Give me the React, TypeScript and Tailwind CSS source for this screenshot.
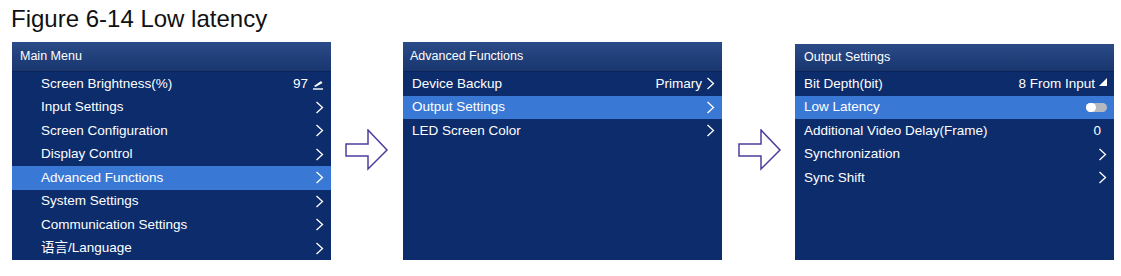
import React from 'react'

type Row = {
  label: string
  value?: string
  icon?: 'chevron' | 'edit' | 'drop' | 'toggle' | 'none'
  active?: boolean
}

const Chevron = () => (
  <svg width="9" height="13" viewBox="0 0 9 13" className="shrink-0">
    <polyline points="1.5,1 7.5,6.5 1.5,12" fill="none" stroke="white" strokeWidth="1.3" />
  </svg>
)

const EditIcon = () => (
  <svg width="12" height="12" viewBox="0 0 12 12" className="shrink-0">
    <path d="M2 8 L9 3 L10.5 5 L3.5 9 Z" fill="white" />
    <line x1="1" y1="11" x2="11" y2="11" stroke="white" strokeWidth="1.4" />
  </svg>
)

const DropIcon = () => (
  <svg width="8" height="8" viewBox="0 0 8 8" className="shrink-0 mb-[3px]">
    <polygon points="8,0 8,8 0,8" fill="white" />
  </svg>
)

const Toggle = () => (
  <div className="relative h-[9px] w-[21px] rounded-full bg-[#b5b8bf]">
    <div className="absolute left-0 top-0 h-[9px] w-[10px] rounded-full bg-white" />
  </div>
)

const Arrow = () => (
  <svg width="44" height="42" viewBox="0 0 44 42" className="shrink-0 mt-[87px]">
    <polygon
      points="1,15 23,15 23,1 42,21 23,40 23,27 1,27"
      fill="white"
      stroke="#4b3f9e"
      strokeWidth="1.5"
      strokeLinejoin="miter"
    />
  </svg>
)

const Panel = (props: {
  title: string
  rows: Row[]
  indent: string
  titlePad: string
  head: string
  box: string
}) => {
  return (
    <div className={`flex w-[319px] shrink-0 flex-col bg-[#0c2c6b] ${props.box}`}>
      <div
        className={`flex items-center border-b border-[#0a2358] bg-gradient-to-b from-[#2b4b88] to-[#18366f] text-[12.5px] text-white ${props.head} ${props.titlePad}`}
      >
        {props.title}
      </div>
      <div className="flex flex-col">
        {props.rows.map((r) => (
          <div
            key={r.label}
            className={`flex h-[23.5px] items-center justify-between pr-[7px] text-[13.5px] text-white ${props.indent} ${
              r.active ? 'bg-[#3a78d6]' : ''
            }`}
          >
            <span>{r.label}</span>
            <div className="flex items-center gap-[4px]">
              {r.value && <span className={r.icon === 'none' ? 'mr-[6px]' : ''}>{r.value}</span>}
              {r.icon === 'chevron' && <Chevron />}
              {r.icon === 'edit' && <EditIcon />}
              {r.icon === 'drop' && <DropIcon />}
              {r.icon === 'toggle' && <Toggle />}
            </div>
          </div>
        ))}
      </div>
    </div>
  )
}

const mainRows: Row[] = [
  { label: 'Screen Brightness(%)', value: '97', icon: 'edit' },
  { label: 'Input Settings', icon: 'chevron' },
  { label: 'Screen Configuration', icon: 'chevron' },
  { label: 'Display Control', icon: 'chevron' },
  { label: 'Advanced Functions', icon: 'chevron', active: true },
  { label: 'System Settings', icon: 'chevron' },
  { label: 'Communication Settings', icon: 'chevron' },
  { label: '语言/Language', icon: 'chevron' },
]

const advRows: Row[] = [
  { label: 'Device Backup', value: 'Primary', icon: 'chevron' },
  { label: 'Output Settings', icon: 'chevron', active: true },
  { label: 'LED Screen Color', icon: 'chevron' },
]

const outRows: Row[] = [
  { label: 'Bit Depth(bit)', value: '8 From Input', icon: 'drop' },
  { label: 'Low Latency', icon: 'toggle', active: true },
  { label: 'Additional Video Delay(Frame)', value: '0', icon: 'none' },
  { label: 'Synchronization', icon: 'chevron' },
  { label: 'Sync Shift', icon: 'chevron' },
]

export default function App() {
  return (
    <div
      className="h-[276px] w-[1121px] overflow-hidden bg-white"
      style={{ fontFamily: '"Liberation Sans", Arial, "Noto Sans CJK SC", sans-serif' }}
    >
      <div className="pl-[11px] pt-[5px] text-[24px] leading-[28px] text-[#111]">Figure 6-14 Low latency</div>
      <div className="mt-[9px] flex items-start pl-[12px]">
        <Panel title="Main Menu" rows={mainRows} indent="pl-[29px]" titlePad="pl-[8px]" head="h-[30px]" box="h-[218px]" />
        <div className="ml-[14px] mr-[14px]">
          <Arrow />
        </div>
        <Panel title="Advanced Functions" rows={advRows} indent="pl-[9px]" titlePad="pl-[7px]" head="h-[30px]" box="h-[218px]" />
        <div className="ml-[16px] mr-[13px]">
          <Arrow />
        </div>
        <Panel
          title="Output Settings"
          rows={outRows}
          indent="pl-[9px]"
          titlePad="pl-[9px]"
          head="h-[28px]"
          box="mt-[2px] h-[216px]"
        />
      </div>
    </div>
  )
}
